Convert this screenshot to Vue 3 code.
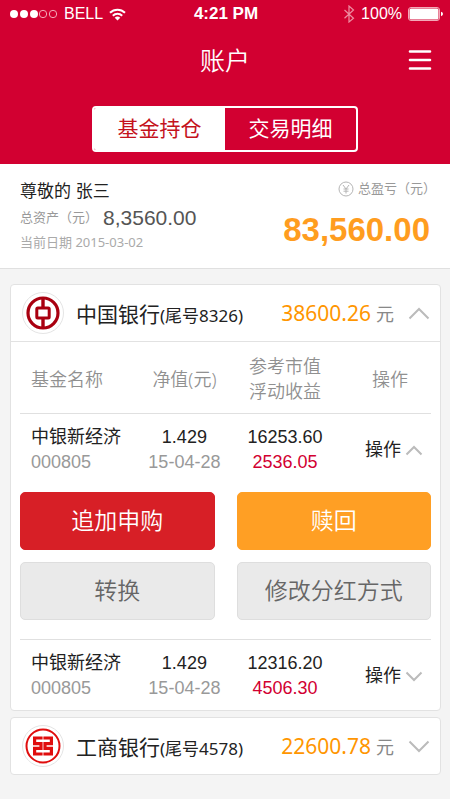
<script setup>
import { ref } from 'vue'

const tabs = ['基金持仓', '交易明细']
const activeTab = ref(0)

const accounts = ref([
  {
    id: 'boc',
    bank: '中国银行',
    tail: '8326',
    total: '38600.26',
    open: true,
    funds: [
      { name: '中银新经济', code: '000805', net: '1.429', date: '15-04-28', value: '16253.60', profit: '2536.05', open: true },
      { name: '中银新经济', code: '000805', net: '1.429', date: '15-04-28', value: '12316.20', profit: '4506.30', open: false }
    ]
  },
  { id: 'icbc', bank: '工商银行', tail: '4578', total: '22600.78', open: false, funds: [] }
])
</script>

<template>
  <div class="page">
    <header class="top">
      <div class="status">
        <div class="status-side">
          <svg class="signal" width="49" height="10" viewBox="0 0 49 10">
            <circle cx="5" cy="5" r="4" fill="#fff" />
            <circle cx="15" cy="5" r="4" fill="#fff" />
            <circle cx="25" cy="5" r="4" fill="#fff" />
            <circle cx="34" cy="5" r="3.7" fill="none" stroke="#f3a9b8" />
            <circle cx="44" cy="5" r="3.7" fill="none" stroke="#f3a9b8" />
          </svg>
          <span>BELL</span>
          <svg width="17" height="13" viewBox="0 0 17 13" fill="none" stroke="#fff" stroke-width="2">
            <path d="M1 4.8a10.6 10.6 0 0 1 15 0" />
            <path d="M3.8 7.7a6.7 6.7 0 0 1 9.4 0" />
            <path d="M8.5 12.6L5.7 9.8a4 4 0 0 1 5.6 0z" fill="#fff" stroke="none" />
          </svg>
        </div>
        <strong class="clock">4:21 PM</strong>
        <div class="status-side status-right">
          <svg class="bluetooth" width="12" height="18" viewBox="0 0 12 18" fill="none" stroke="#ee8da2" stroke-width="1.2">
            <path d="M1.5 5L10.5 13.3L6 17V1L10.5 5L1.5 13.3" />
          </svg>
          <span>100%</span>
          <svg width="35" height="14" viewBox="0 0 35 14">
            <rect x="0.5" y="0.5" width="31" height="13" rx="2.5" fill="none" stroke="#f3a9b8" />
            <rect x="1.5" y="1.5" width="29" height="11" rx="1.5" fill="#fff" />
            <path d="M33 4.8q2 .6 2 2.2t-2 2.2z" fill="#fff" />
          </svg>
        </div>
      </div>
      <div class="title-bar">
        <h1>账户</h1>
        <button class="menu" type="button" aria-label="菜单">
          <svg width="24" height="22" viewBox="0 0 24 22" stroke="#fff" stroke-width="2.6" stroke-linecap="round">
            <path d="M2 1.5H22M2 10H22M2 18.5H22" />
          </svg>
        </button>
      </div>
      <nav class="tabs">
        <button
          v-for="(tab, i) in tabs"
          :key="tab"
          type="button"
          class="tab"
          :class="{ active: activeTab === i }"
          @click="activeTab = i"
        >{{ tab }}</button>
      </nav>
    </header>

    <section class="summary">
      <div class="owner">
        <p class="greeting">尊敬的 张三</p>
        <p class="assets"><span>总资产（元）</span><b>8,3560.00</b></p>
        <p class="today">当前日期 2015-03-02</p>
      </div>
      <div class="gain">
        <p class="gain-label">
          <svg width="16" height="16" viewBox="0 0 16 16" fill="none" stroke="#b5b5b5">
            <circle cx="8" cy="8" r="7" />
            <path d="M5 4L8 8L11 4M8 8V12.5M5.5 8H10.5M5.5 10.2H10.5" />
          </svg>
          <span>总盈亏（元）</span>
        </p>
        <p class="gain-value">83,560.00</p>
      </div>
    </section>

    <main class="accounts">
      <article v-for="account in accounts" :key="account.id" class="card">
        <button class="card-head" type="button" :aria-expanded="account.open" @click="account.open = !account.open">
          <svg v-if="account.id === 'boc'" class="logo" width="42" height="42" viewBox="0 0 42 42">
            <circle cx="21" cy="21" r="20.5" fill="#fff" stroke="#e4e4e4" />
            <g fill="none" stroke="#a90010">
              <circle cx="21" cy="21" r="15" stroke-width="3.2" />
              <rect x="14.8" y="16" width="12.4" height="10" rx="1" stroke-width="3" />
              <path d="M21 6V15M21 27V36" stroke-width="3.4" />
            </g>
          </svg>
          <svg v-else class="logo" width="42" height="42" viewBox="0 0 42 42">
            <circle cx="21" cy="21" r="20.5" fill="#fff" stroke="#e4e4e4" />
            <g fill="none" stroke="#e00d0d">
              <circle cx="21" cy="21" r="16.5" stroke-width="2" />
              <path d="M20.6 13H12.6V18.6H19V23.4H12.6V29H20.6" stroke-width="3.2" />
              <path d="M21.4 13H29.4V18.6H23V23.4H29.4V29H21.4" stroke-width="3.2" />
            </g>
          </svg>
          <span class="bank">{{ account.bank }}<small>(尾号{{ account.tail }})</small></span>
          <span class="total">{{ account.total }}</span>
          <span class="unit">元</span>
          <svg class="chevron" :class="{ up: account.open }" width="22" height="13" viewBox="0 0 22 13">
            <path d="M1.5 1.5L11 11L20.5 1.5" />
          </svg>
        </button>

        <div v-if="account.open && account.funds.length" class="card-body">
          <table class="funds">
            <thead>
              <tr>
                <th class="col-name">基金名称</th>
                <th class="col-net">净值(元)</th>
                <th class="col-value">参考市值<br />浮动收益</th>
                <th class="col-op">操作</th>
              </tr>
            </thead>
            <tbody v-for="(fund, i) in account.funds" :key="i">
              <tr class="fund">
                <td class="col-name">{{ fund.name }}<span class="sub">{{ fund.code }}</span></td>
                <td class="col-net">{{ fund.net }}<span class="sub">{{ fund.date }}</span></td>
                <td class="col-value">{{ fund.value }}<span class="sub profit">{{ fund.profit }}</span></td>
                <td class="col-op">
                  <button class="toggle" type="button" :aria-expanded="fund.open" @click="fund.open = !fund.open">
                    操作
                    <svg class="chevron" :class="{ up: fund.open }" width="18" height="11" viewBox="0 0 18 11">
                      <path d="M1.5 1.5L9 9L16.5 1.5" />
                    </svg>
                  </button>
                </td>
              </tr>
              <tr v-if="fund.open">
                <td colspan="4">
                  <div class="actions">
                    <button class="action buy" type="button">追加申购</button>
                    <button class="action redeem" type="button">赎回</button>
                    <button class="action" type="button">转换</button>
                    <button class="action" type="button">修改分红方式</button>
                  </div>
                </td>
              </tr>
            </tbody>
          </table>
        </div>
      </article>
    </main>
  </div>
</template>

<style>
body {
  margin: 0;
  background: #f4f4f4;
}
</style>

<style scoped>
.page {
  min-height: 100vh;
  background: #f4f4f4;
  color: #222;
  font-family: "Liberation Sans", "Noto Sans CJK SC", sans-serif;
  font-size: 18px;
}

button {
  margin: 0;
  padding: 0;
  border: 0;
  background: none;
  color: inherit;
  font: inherit;
  cursor: pointer;
}

p,
h1 {
  margin: 0;
  font-weight: 400;
}

svg {
  display: block;
  flex: none;
}

.top {
  padding-bottom: 12px;
  background: #d20031;
  color: #fff;
}

.status {
  display: flex;
  align-items: center;
  height: 28px;
  padding: 0 7px 0 9px;
  font-size: 16px;
}

.status-side {
  display: flex;
  flex: 1;
  align-items: center;
  gap: 6px;
}

.status-right {
  justify-content: flex-end;
}

.clock {
  font-size: 17px;
}

.title-bar {
  display: grid;
  grid-template-columns: 1fr auto 1fr;
  align-items: center;
  height: 66px;
  padding: 0 18px;
}

h1 {
  grid-column: 2;
  font-size: 25px;
  font-weight: 350;
  line-height: 36px;
}

.menu {
  justify-self: end;
}

.tabs {
  display: flex;
  height: 46px;
  margin: 12px 92px 0;
  box-sizing: border-box;
  overflow: hidden;
  border: 2px solid #fff;
  border-radius: 4px;
}

.tab {
  flex: 1;
  color: #fff;
  font-size: 21px;
  line-height: 40px;
}

.tab.active {
  background: #fff;
  color: #c4121c;
}

.summary {
  display: flex;
  justify-content: space-between;
  padding: 14px 20px 8px;
  border-bottom: 1px solid #e0e0e0;
  background: #fff;
  white-space: nowrap;
}

.greeting {
  font-size: 17px;
  line-height: 28px;
}

.assets {
  display: flex;
  align-items: center;
  color: #999;
  font-size: 13px;
  line-height: 24px;
}

.assets b {
  margin-left: 5px;
  color: #555;
  font-size: 21px;
  font-weight: 400;
}

.today {
  color: #aaa;
  font-family: "Noto Sans", "Noto Sans CJK SC", sans-serif;
  font-size: 13px;
  line-height: 24px;
}

.gain-label {
  display: flex;
  align-items: center;
  justify-content: flex-end;
  gap: 4px;
  margin-right: -6px;
  color: #999;
  font-size: 13px;
  line-height: 22px;
}

.gain-value {
  color: #ff9d1f;
  font-size: 33px;
  font-weight: 700;
  line-height: 60px;
}

.accounts {
  display: grid;
  gap: 6px;
  padding: 15px 9px 24px 10px;
}

.card {
  border: 1px solid #e2e2e2;
  border-radius: 4px;
  background: #fff;
}

.card-head {
  display: flex;
  align-items: center;
  width: 100%;
  height: 56px;
  padding: 0 10px 0 11px;
  font-family: "Noto Sans", "Noto Sans CJK SC", sans-serif;
  text-align: left;
  white-space: nowrap;
}

.bank {
  flex: 1;
  margin-left: 12px;
  font-size: 21px;
}

.bank small {
  font-size: 17px;
}

.total {
  color: #ff9600;
  font-size: 21px;
}

.unit {
  margin: 0 14px 0 5px;
  color: #888;
}

.chevron {
  fill: none;
  stroke: #bbb;
  stroke-width: 2;
}

.chevron.up {
  transform: rotate(180deg);
}

.card-body {
  padding: 0 9px;
  border-top: 1px solid #e2e2e2;
}

.funds {
  width: 100%;
  border-collapse: collapse;
  table-layout: fixed;
  line-height: 25px;
  text-align: center;
  white-space: nowrap;
}

th {
  padding: 12px 0 9px;
  color: #909090;
  font-family: "Noto Sans", "Noto Sans CJK SC", sans-serif;
  font-weight: 350;
}

td {
  padding: 0;
}

tbody {
  border-top: 1px solid #e0e0e0;
}

.fund td {
  padding: 11px 0 9px;
}

.col-name {
  width: 31%;
  text-align: left;
}

th.col-name,
.fund td.col-name {
  padding-left: 11px;
  box-sizing: border-box;
}

.col-net {
  width: 18%;
}

.col-value {
  width: 31%;
}

.col-op {
  width: 20%;
}

.sub {
  display: block;
  color: #999;
}

.profit {
  color: #d20031;
}

.toggle {
  display: inline-flex;
  align-items: center;
  gap: 4px;
  margin-left: 8px;
}

.actions {
  display: grid;
  grid-template-columns: 1fr 1fr;
  gap: 12px 22px;
  padding: 8px 0 19px;
}

.action {
  height: 58px;
  border: 1px solid #dedede;
  border-radius: 5px;
  background: #eaeaea;
  color: #666;
  font-size: 23px;
  font-weight: 350;
}

.buy {
  border-color: #d71f26;
  background: #d71f26;
  color: #fff;
}

.redeem {
  border-color: #ff9f24;
  background: #ff9f24;
  color: #fff;
}
</style>
